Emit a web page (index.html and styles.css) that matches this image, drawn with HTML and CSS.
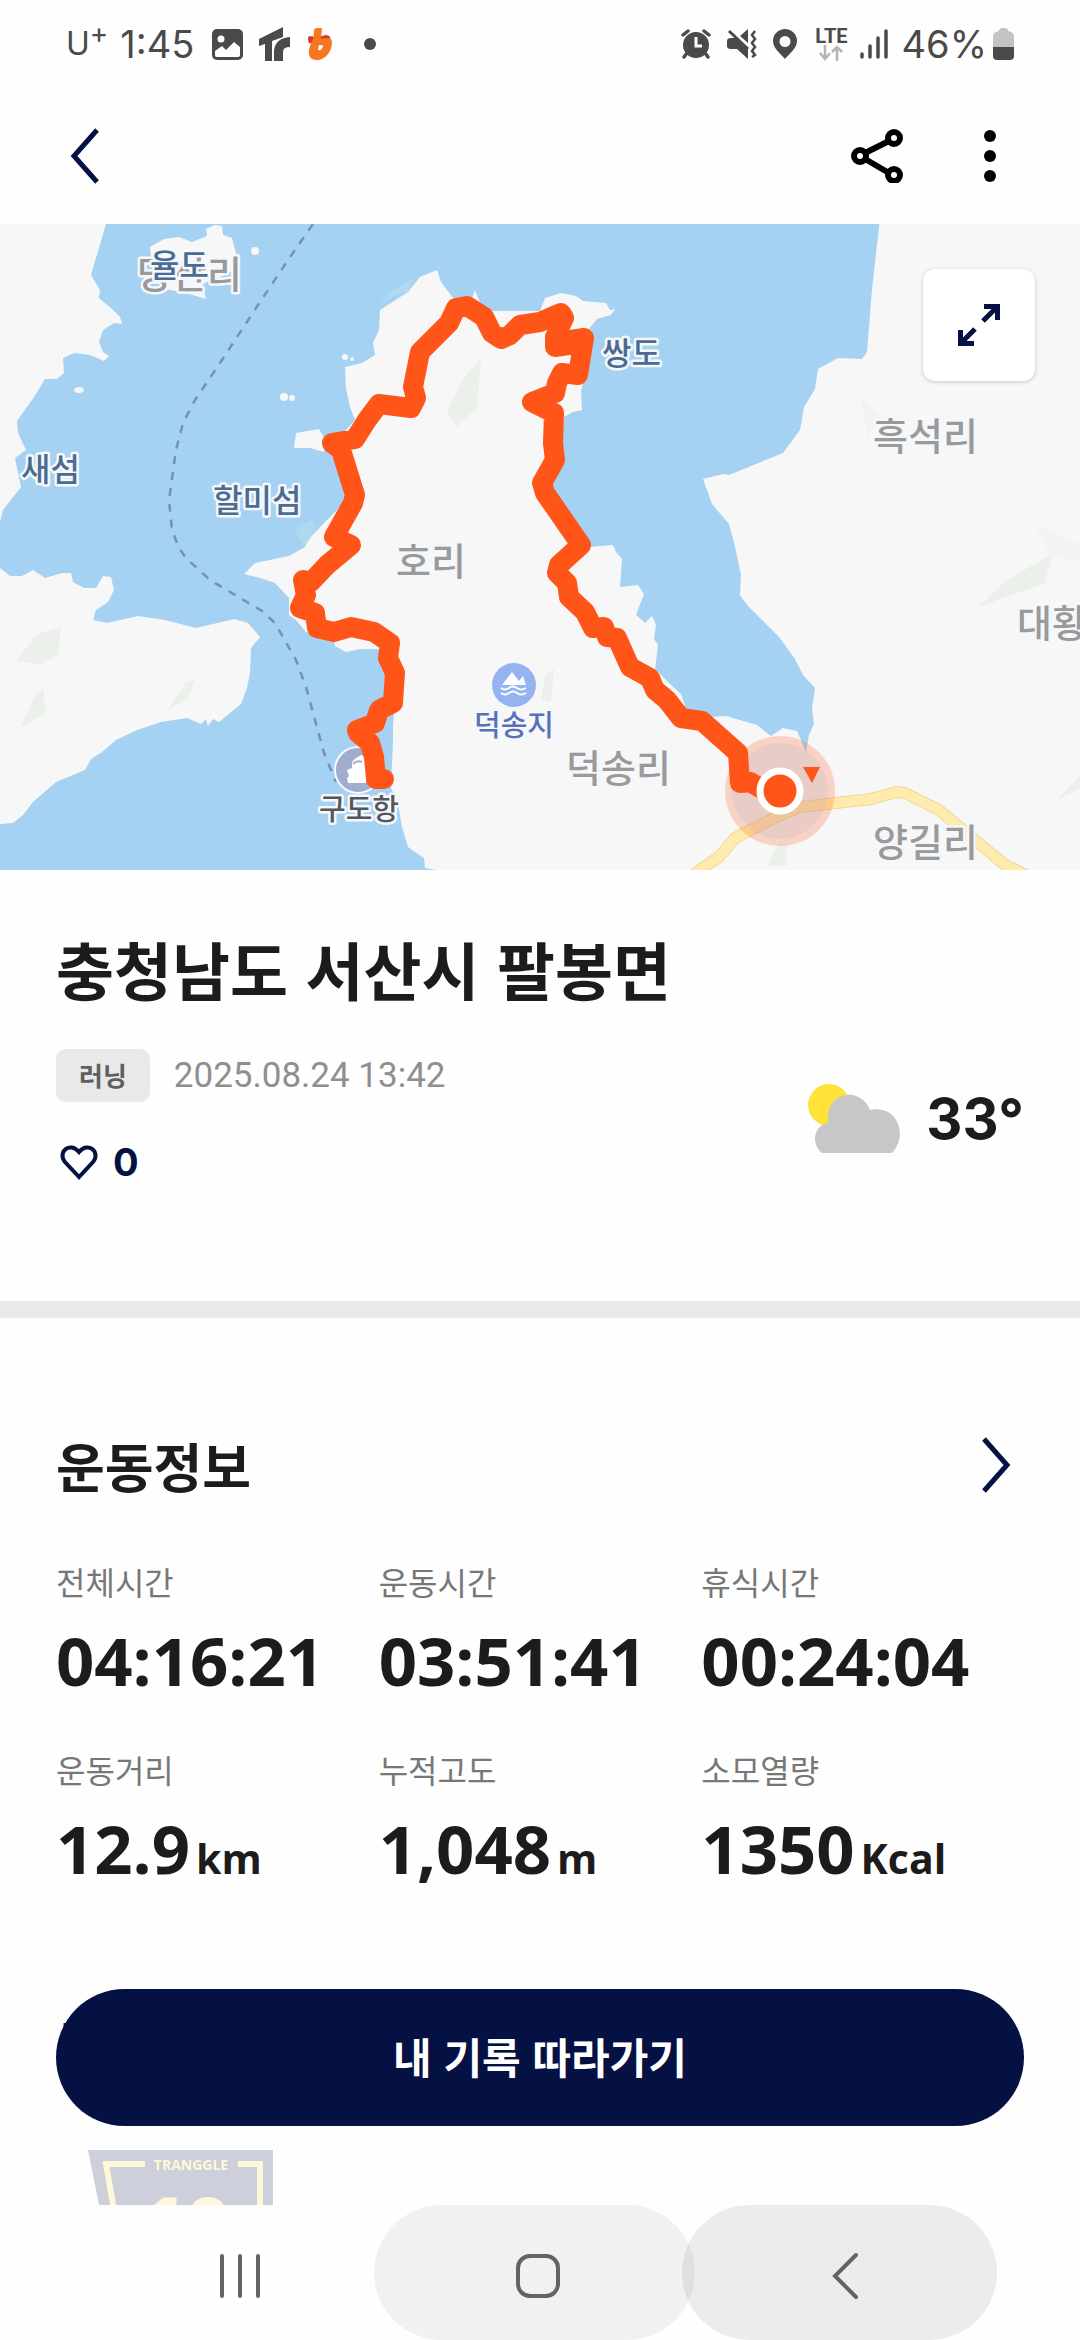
FILE: index.html
```html
<!DOCTYPE html>
<html lang="ko">
<head>
    <meta charset="UTF-8">
    <meta name="viewport" content="width=device-width, initial-scale=1.0">
    <title>충청남도 서산시 팔봉면</title>
    <link rel="stylesheet" href="styles.css">
</head>
<body>
    <div class="status-bar">
        <div class="status-left">
            <span class="carrier">U<sup>+</sup></span>
            <span class="clock">1:45</span>
            <svg class="icon-photo" width="31" height="31" viewBox="0 0 31 31">
                <rect width="31" height="31" rx="5" fill="#4a4a4a"/>
                <circle cx="9" cy="10" r="3.5" fill="#fefefe"/>
                <path d="M3 22l7-5 4 4 8-8 6 5v8q0 2-2 2H5q-2 0-2-2z" fill="#fefefe"/>
            </svg>
            <svg class="icon-tr" width="31" height="34" viewBox="0 0 31 34" fill="#4a4a4a">
                <path d="M0 12L24 0v10l-11 4v20H6V17l-6 2z"/>
                <path d="M31 10v10q-7 0-7 5v9h-9V23q2-12 16-13z"/>
            </svg>
            <svg class="icon-b" width="24" height="32" viewBox="0 0 24 32">
                <path d="M1 8q9 2 17-1 6 1 4 6l-8 4L1 15Q-1 11 1 8z" fill="#dd3526"/>
                <path d="M6 2q1-2 3-2h5l-1 11q10-3 11 3c0 10-7 18-15 18-7 0-9-5-8-10L3 15q3-4 3-13zm5 15l-1 5q4 1 5-4-1-2-4-1z" fill="#f67721" fill-rule="evenodd"/>
            </svg>
            <span class="dot"></span>
        </div>
        <div class="status-right">
            <svg class="icon-alarm" width="30" height="30" viewBox="0 0 30 30">
                <circle cx="15" cy="16" r="13" fill="#4a4a4a"/>
                <path d="M2 6l5-4M28 6l-5-4M6 24l-3 4M24 24l3 4" stroke="#4a4a4a" stroke-width="3.5" stroke-linecap="round"/>
                <path d="M15 8v9h6" fill="none" stroke="#fefefe" stroke-width="3"/>
            </svg>
            <svg class="icon-mute" width="30" height="30" viewBox="0 0 30 30">
                <path d="M0 12q0-3 4-3h5L21 20v10L10 20H4q-4 0-4-3zM13 7l8-7v14z" fill="#4a4a4a"/>
                <path d="M2 2l19 18" stroke="#4a4a4a" stroke-width="3"/>
                <path d="M28 2l-3 4 3 4-3 4 3 4-3 4 3 4-3 2" fill="none" stroke="#4a4a4a" stroke-width="2.5"/>
            </svg>
            <svg class="icon-pin" width="24" height="30" viewBox="0 0 24 30">
                <path d="M12 0a12 12 0 0112 12c0 7-7 12-12 18C7 24 0 19 0 12A12 12 0 0112 0zm0 7a5 5 0 100 11 5 5 0 000-11z" fill="#4a4a4a" fill-rule="evenodd"/>
            </svg>
            <div class="network">
                <span class="lte">LTE</span>
                <svg width="24" height="16" viewBox="0 0 24 16" fill="none" stroke="#b5b5b5" stroke-width="2.5">
                    <path d="M6 0v13M1 8l5 6 5-6M18 16V2M13 7l5-5 5 5"/>
                </svg>
            </div>
            <svg class="icon-signal" width="28" height="30" viewBox="0 0 28 30" stroke="#4a4a4a" stroke-width="3.5" stroke-linecap="round">
                <path d="M2 25v3M10 17v11M18 9v19M26 2v26"/>
            </svg>
            <span class="battery-text">46%</span>
            <svg width="21" height="32" viewBox="0 0 21 32">
                <path d="M6 3q0-3 3-3h3q3 0 3 3 6 1 6 5v12H0V8q0-4 6-5z" fill="#c3c3c3"/>
                <path d="M0 19h21v9q0 4-4 4H4q-4 0-4-4z" fill="#4a4a4a"/>
            </svg>
        </div>
    </div>

    <header class="header">
        <button class="icon-btn" aria-label="뒤로">
            <svg width="32" height="56" viewBox="0 0 32 56"><path d="M29 2L6 28l23 26" fill="none" stroke="#051142" stroke-width="5"/></svg>
        </button>
        <div class="header-actions">
            <button class="icon-btn" aria-label="공유">
                <svg width="52" height="54" viewBox="0 0 52 54" fill="none" stroke="#000" stroke-width="6">
                    <circle cx="9" cy="27" r="6"/><circle cx="43" cy="9" r="6"/><circle cx="43" cy="46" r="6"/>
                    <path d="M14 24l24-12M14 30l24 14"/>
                </svg>
            </button>
            <button class="icon-btn" aria-label="더보기">
                <svg width="12" height="52" viewBox="0 0 12 52"><circle cx="6" cy="6" r="6"/><circle cx="6" cy="26" r="6"/><circle cx="6" cy="46" r="6"/></svg>
            </button>
        </div>
    </header>

    <main class="content">
        <div class="map">
            <svg class="map-canvas" viewBox="0 0 1080 646">
                <rect width="1080" height="646" fill="#a5d2f3"/>
                <!-- land -->
                <g fill="#f7f7f7">
                    <path d="M0 0H106L91 51l9 15-1 8 13 11 8 8 2 7-8-1-11 7-4 12 4 10 6 4-5 5-14-6-16-2-11 5 1 15-7 6H45L34 173 17 197l1 12 8 17-11 8 6 29L3 286l-3 12z"/>
                    <path d="M150 23l14-8 15-2 13 5 15-6-1-7 9-4 7 1 1 9 9 3 4 15-2 17-14 7-10 3-8 5 4 14-20-6-21-4-12-12z"/>
                    <path d="M296 209l23-4 5 9v14l-14-4h-16z"/>
                    <path d="M0 344l10 8h12l11-6 12 8 17-5h9l2 9 11 6h12l7-12 8 1 3 13-6 12-12 8-3 10 14 3 31-7 27 4 31 8 17-4 21-5 14 4 12 14-9 11-1 25-3 15-6 16-22 18-6-3-5 7-2-7-5 5-14-6-26 4-24 8-21 10-14 12-11 7-6 11-29 12-23 20-10 13-10 8-14 1z"/>
                    <path d="M437 646l-12-2-1-10-16-11-6-20-4-24-7-15 2-48v-13l3-47-7-28-12-3h-17l-14 3-11-6-1-6-28-8-10-12-7-5v-17l-14-15-15-5-16-4 11-11 34-7 16-9 3-7 17-18 19-19 4-16-17-40 24-27-5-13-4-19-1-21 17-4 13-8-2-12 6-13 1-20 28-18 12-15 17-7 4 12 12 16h19l3-8 5 13 9 8h51l5-13 16-5 15 3 7 5 23 2 4 7 5-1-4 6-14 4-9 11-3 42-4 20 1 18-9 2-9 5-10 38-4 30 24 37 16 25 23-2 3 7 6 7-2 28 18-2 6 9-8 21 9 8 7-7 4 9-2 14 4 6-3 24 16 16 10 9 5 15 23 8 17-1 31 9 14 11 12-8 14 3 9 21 3-17 5-11-2-15 3-21-12-13-8-16-16-22-32-32-7-10 1-20-7-33-5-18-17-20-9-25 20-5 6 1 54-22 17-23 4-23 11-18 3-20 20-11 24 1 5-7 5-63 8-70h204v656z"/>
                    <circle cx="255" cy="27" r="4"/><ellipse cx="79" cy="166" rx="5" ry="3"/>
                    <circle cx="284" cy="173" r="4"/><circle cx="292" cy="174" r="3"/>
                    <circle cx="345" cy="133" r="3"/><circle cx="352" cy="135" r="2"/>
                </g>
                <path d="M380 86q0-12 28-18l7-15-20 12-14 13zM294 304l18-8 4 10-12 17z" fill="#b1d8f1"/>
                <!-- woods -->
                <g fill="#ebf0ea">
                    <path d="M447 188l16-33 18-21-4 50-21 19zM16 437l20-26 25-8-3 28-17 10zM20 504l15-33 8-7 3 25zM167 487l19-29 9-2-7 19zM978 383l26-25 49-29-9 31zM1057 576l23-25v14zM541 477l4-26 9-6-3 32zM768 642l10-22h9l-1 22z"/>
                    <path d="M860 171l20 22-12 22zM1035 300l45 20v18l-30-8z" fill="#f2f4f1"/>
                </g>
                <!-- road -->
                <path d="M694 650l25-17 16-19 39-20 26-11 36-4 35-4 25-7 9 1 34 17 66 55 25 12" fill="none" stroke="#ead996" stroke-width="12"/>
                <path d="M694 650l25-17 16-19 39-20 26-11 36-4 35-4 25-7 9 1 34 17 66 55 25 12" fill="none" stroke="#ffebad" stroke-width="10"/>
                <!-- ferry line -->
                <path d="M313 0l-27 39-28 42-38 58-25 37-12 23-7 27-7 50 3 30 7 18 7 10 24 22 52 31 13 12 21 37 10 27 18 66 12 29" fill="none" stroke="#6f93b9" stroke-width="2.5" stroke-dasharray="8 8"/>
                <!-- places -->
                <circle cx="514" cy="461" r="22" fill="#96b3f1"/>
                <path d="M502 461l10-13 7 9 4-5 3 9z" fill="#fff"/>
                <path d="M501 464q4 3 8 0t8 0 9 0M501 469q4 3 8 0t8 0 9 0" fill="none" stroke="#fff" stroke-width="2"/>
                <circle cx="358" cy="546" r="23" fill="#a2accf" stroke="#f5f8fc" stroke-width="2"/>
                <path d="M347 546l5-2v-6l4-4 5-3 5 2v26h-18l-1-5 2-2z" fill="#fff"/>
                <path d="M353 540q4-4 9-2" fill="none" stroke="#a2accf" stroke-width="2"/>
                <g class="map-labels">
                    <text class="village" x="137" y="64">당산리</text>
                    <text class="island" x="150" y="53">율도</text>
                    <text class="island" x="21" y="257">새섬</text>
                    <text class="island" x="213" y="288">할미섬</text>
                    <text class="island" x="602" y="141">쌍도</text>
                    <text class="village" x="873" y="226">흑석리</text>
                    <text class="village" x="396" y="351">호리</text>
                    <text class="village" x="1017" y="413">대황리</text>
                    <text class="village" x="566" y="558">덕송리</text>
                    <text class="village" x="873" y="632">양길리</text>
                    <text class="lake" x="474" y="512">덕송지</text>
                    <text class="port" x="319" y="596">구도항</text>
                </g>
                <!-- current position -->
                <circle cx="780" cy="567" r="55" fill="#ff5518" fill-opacity=".22"/>
                <circle cx="780" cy="567" r="48" fill="#b4b4cd" fill-opacity=".2"/>
                <path d="M803 543h17l-8 16z" fill="#ff5518"/>
                <!-- track -->
                <path d="M384 555h-8l-2-22-4-14-12-10-1-3 18-7 4-13 14-7 1-16 1-14-7-15 2-15-16-11-23-5-17 5-17-4-2-15-15-5 6-13-3-15 8 2 16-17 24-20-17-8 19-34 2-8-14-45-9-7 23-4 12-19 12-16 32 4 5-10-3-11 7-35 29-29 7-15 11-2 17 11 8 16 9 6 9-4 10-10 20-3 21-9 3 5-9 19v10l13-2 3-5 13-2-6 37-16-2-5 10-2 10-23 9 22 11-1 30 2 17-13 23 3 10 36 52-22 20-2 8 10 10 2 14 16 15 8 16 11-1 3 10 10 1 13 29 20 11 5 12 12 10 14 18 21 3 36 32 2 30 10-1 12 7" fill="none" stroke="#ff5518" stroke-width="20" stroke-linejoin="round" stroke-linecap="round"/>
                <circle cx="780" cy="567" r="20" fill="#ff5518" stroke="#fff" stroke-width="7"/>
            </svg>
            <button class="expand-btn" aria-label="지도 확대">
                <svg width="42" height="42" viewBox="0 0 42 42" fill="none" stroke="#051142" stroke-width="5">
                    <path d="M26 2.500h13.500V16M39 3L25 17M2.500 26v13.500H16M3 39l14-14"/>
                </svg>
            </button>
        </div>

        <section class="summary">
            <h1>충청남도 서산시 팔봉면</h1>
            <div class="summary-row">
                <div class="meta">
                    <div class="meta-line">
                        <span class="tag">러닝</span>
                        <time class="date" datetime="2025-08-24T13:42">2025.08.24 13:42</time>
                    </div>
                    <button class="like-btn" aria-label="좋아요 0">
                        <svg width="40" height="36" viewBox="0 0 40 36"><path d="M20 33L6 18C-2 8 11-3 20 8 29-3 42 8 34 18z" fill="none" stroke="#051142" stroke-width="4"/></svg>
                        <span>0</span>
                    </button>
                </div>
                <div class="weather">
                    <svg width="92" height="70" viewBox="0 0 92 70">
                        <circle cx="21" cy="21" r="21" fill="#ffe338"/>
                        <path d="M14 69C3 60 5 42 20 39 17 5 54 3 62 26c27-6 39 25 22 43z" fill="#c7c7c7"/>
                    </svg>
                    <span>33°</span>
                </div>
            </div>
        </section>

        <section class="workout">
            <div class="section-head">
                <h2>운동정보</h2>
                <button class="icon-btn" aria-label="운동정보 더보기">
                    <svg width="32" height="56" viewBox="0 0 32 56"><path d="M4 2l23 26L4 54" fill="none" stroke="#051142" stroke-width="5"/></svg>
                </button>
            </div>
            <dl class="stats">
                <div><dt>전체시간</dt><dd>04:16:21</dd></div>
                <div><dt>운동시간</dt><dd>03:51:41</dd></div>
                <div><dt>휴식시간</dt><dd>00:24:04</dd></div>
                <div><dt>운동거리</dt><dd>12.9<small>km</small></dd></div>
                <div><dt>누적고도</dt><dd>1,048<small>m</small></dd></div>
                <div><dt>소모열량</dt><dd>1350<small>Kcal</small></dd></div>
            </dl>
        </section>

        <section class="badges">
            <h2>동</h2>
            <svg class="badge" width="185" height="220" viewBox="0 0 185 220">
                <path d="M0 0h185v220H44z" fill="#cdd0da"/>
                <path d="M57 14H18l35 200M150 14h22v206" fill="none" stroke="#fef7d8" stroke-width="6"/>
                <text class="badge-brand" x="103" y="20">TRANGGLE</text>
                <text class="badge-level" x="98" y="102">10</text>
            </svg>
        </section>

        <button class="follow-btn">내 기록 따라가기</button>
    </main>

    <nav class="nav-bar">
        <button class="nav-btn nav-recents" aria-label="최근 앱">
            <svg width="40" height="44" viewBox="0 0 40 44" stroke="#636363" stroke-width="4" stroke-linecap="round"><path d="M2 2v40M20 2v40M38 2v40"/></svg>
        </button>
        <button class="nav-btn nav-home" aria-label="홈">
            <svg width="46" height="46" viewBox="0 0 46 46"><rect x="3" y="3" width="40" height="40" rx="12" fill="none" stroke="#636363" stroke-width="4"/></svg>
        </button>
        <button class="nav-btn nav-back" aria-label="뒤로">
            <svg width="28" height="48" viewBox="0 0 28 48"><path d="M25 3L4 24l21 21" fill="none" stroke="#636363" stroke-width="4" stroke-linecap="round"/></svg>
        </button>
    </nav>
</body>
</html>
```
FILE: styles.css
```css
* {
    margin: 0;
    padding: 0;
    box-sizing: border-box;
}

body {
    font-family: 'Noto Sans CJK KR', sans-serif;
    background: #fefefe;
    color: #1c1c1c;
    height: 100vh;
    display: flex;
    flex-direction: column;
}

svg {
    display: block;
    flex-shrink: 0;
}

button {
    border: none;
    background: none;
    font-family: inherit;
    color: inherit;
    cursor: pointer;
}

/* Status bar */
.status-bar {
    height: 88px;
    padding: 0 66px;
    display: flex;
    align-items: center;
    justify-content: space-between;
    flex-shrink: 0;
    font-family: Inter, sans-serif;
    font-size: 38px;
    line-height: 40px;
    color: #4a4a4a;
}

.status-left,
.status-right {
    display: flex;
    align-items: center;
}

.carrier {
    font-size: 32px;
    margin-right: 12px;
}

.carrier sup {
    font-size: 28px;
    line-height: 0;
}

.icon-photo {
    margin: 0 16px 0 18px;
}

.icon-tr {
    margin-right: 18px;
}

.dot {
    width: 12px;
    height: 12px;
    border-radius: 50%;
    background: #4a4a4a;
    margin-left: 32px;
}

.icon-alarm,
.icon-mute {
    margin-right: 16px;
}

.icon-pin {
    margin-right: 18px;
}

.network {
    display: flex;
    flex-direction: column;
    align-items: center;
    margin-right: 12px;
}

.lte {
    font-family: Roboto, sans-serif;
    font-size: 20px;
    font-weight: 700;
    line-height: 18px;
}

.icon-signal {
    margin-right: 14px;
}

.battery-text {
    margin-right: 6px;
}

/* App header */
.header {
    height: 136px;
    padding: 0 84px 0 68px;
    display: flex;
    align-items: center;
    justify-content: space-between;
    flex-shrink: 0;
}

.header-actions {
    display: flex;
    align-items: center;
    gap: 81px;
}

.content {
    position: relative;
    flex: 1;
    min-height: 0;
    overflow: hidden;
}

/* Map */
.map {
    position: relative;
}

.map-canvas {
    width: 100%;
    height: auto;
}

.map-labels text {
    font-weight: 500;
    paint-order: stroke;
    stroke: #f4f8fb;
    stroke-width: 5px;
    stroke-linejoin: round;
}

.map-labels .village {
    font-size: 38px;
    fill: #9b9999;
}

.map-labels .island {
    font-size: 32px;
    fill: #4c6b92;
}

.map-labels .lake {
    font-size: 29px;
    fill: #5a70b6;
}

.map-labels .port {
    font-size: 29px;
    fill: #55565c;
}

.expand-btn {
    position: absolute;
    top: 45px;
    right: 45px;
    width: 112px;
    height: 112px;
    border-radius: 12px;
    background: #fff;
    box-shadow: 0 1px 4px rgba(0, 0, 0, 0.2);
    display: flex;
    align-items: center;
    justify-content: center;
}

/* Summary */
.summary {
    padding: 58px 56px 119px;
    border-bottom: 17px solid #e9e9e9;
}

h1 {
    font-size: 63px;
    line-height: 80px;
    font-weight: 700;
    margin-bottom: 41px;
}

.summary-row {
    display: flex;
    align-items: center;
    justify-content: space-between;
}

.meta-line {
    display: flex;
    align-items: center;
    gap: 24px;
    margin-bottom: 40px;
}

.tag {
    background: #e9e9e9;
    color: #5f5f5f;
    border-radius: 10px;
    padding: 5px 23px 7px;
    font-size: 26px;
    line-height: 41px;
    font-weight: 700;
}

.date {
    font-family: Roboto, sans-serif;
    font-size: 35px;
    line-height: 40px;
    color: #8f8f8f;
}

.like-btn {
    display: flex;
    align-items: center;
    gap: 14px;
    padding-left: 3px;
    font-family: Inter, sans-serif;
    font-size: 38px;
    font-weight: 700;
    line-height: 40px;
    color: #051142;
}

.weather {
    display: flex;
    align-items: center;
    gap: 26px;
    padding-top: 6px;
    font-family: Inter, sans-serif;
    font-size: 56px;
    font-weight: 700;
    line-height: 64px;
}

/* Workout info */
.workout {
    padding: 115px 56px 0;
}

.section-head {
    display: flex;
    align-items: center;
    justify-content: space-between;
    padding-right: 12px;
    margin-bottom: 64px;
}

h2 {
    font-size: 53px;
    line-height: 64px;
    font-weight: 700;
}

.stats {
    display: grid;
    grid-template-columns: repeat(3, 1fr);
    row-gap: 54px;
}

.stats dt {
    font-size: 32px;
    line-height: 40px;
    color: #777;
    margin-bottom: 24px;
}

.stats dd {
    font-family: 'Open Sans', sans-serif;
    font-size: 67px;
    line-height: 70px;
    font-weight: 700;
}

.stats small {
    font-size: 41px;
    margin-left: 6px;
}

/* Badges */
.badges {
    padding: 118px 56px 0;
}

.badge {
    margin: 75px 0 0 32px;
}

.badge-brand,
.badge-level {
    font-family: 'Open Sans', sans-serif;
    font-weight: 700;
    fill: #fef7d8;
    text-anchor: middle;
}

.badge-brand {
    font-size: 14px;
}

.badge-level {
    font-size: 76px;
    font-weight: 800;
}

.follow-btn {
    position: absolute;
    left: 56px;
    right: 56px;
    bottom: 79px;
    height: 137px;
    padding-bottom: 5px;
    border-radius: 69px;
    background: #051142;
    color: #fff;
    font-size: 42px;
    font-weight: 700;
}

/* Navigation bar */
.nav-bar {
    height: 135px;
    padding: 0 83px 0 93px;
    flex-shrink: 0;
    display: flex;
    background: #fefefe;
}

.nav-btn {
    border-radius: 68px;
    display: flex;
    align-items: center;
    justify-content: center;
    padding-top: 6px;
}

.nav-recents {
    flex: 30;
}

.nav-home {
    flex: 32;
    background: rgba(0, 0, 0, 0.05);
    margin-left: -13px;
    padding-left: 8px;
}

.nav-back {
    flex: 31;
    background: rgba(0, 0, 0, 0.07);
    margin-left: -13px;
    padding-left: 12px;
}
```
